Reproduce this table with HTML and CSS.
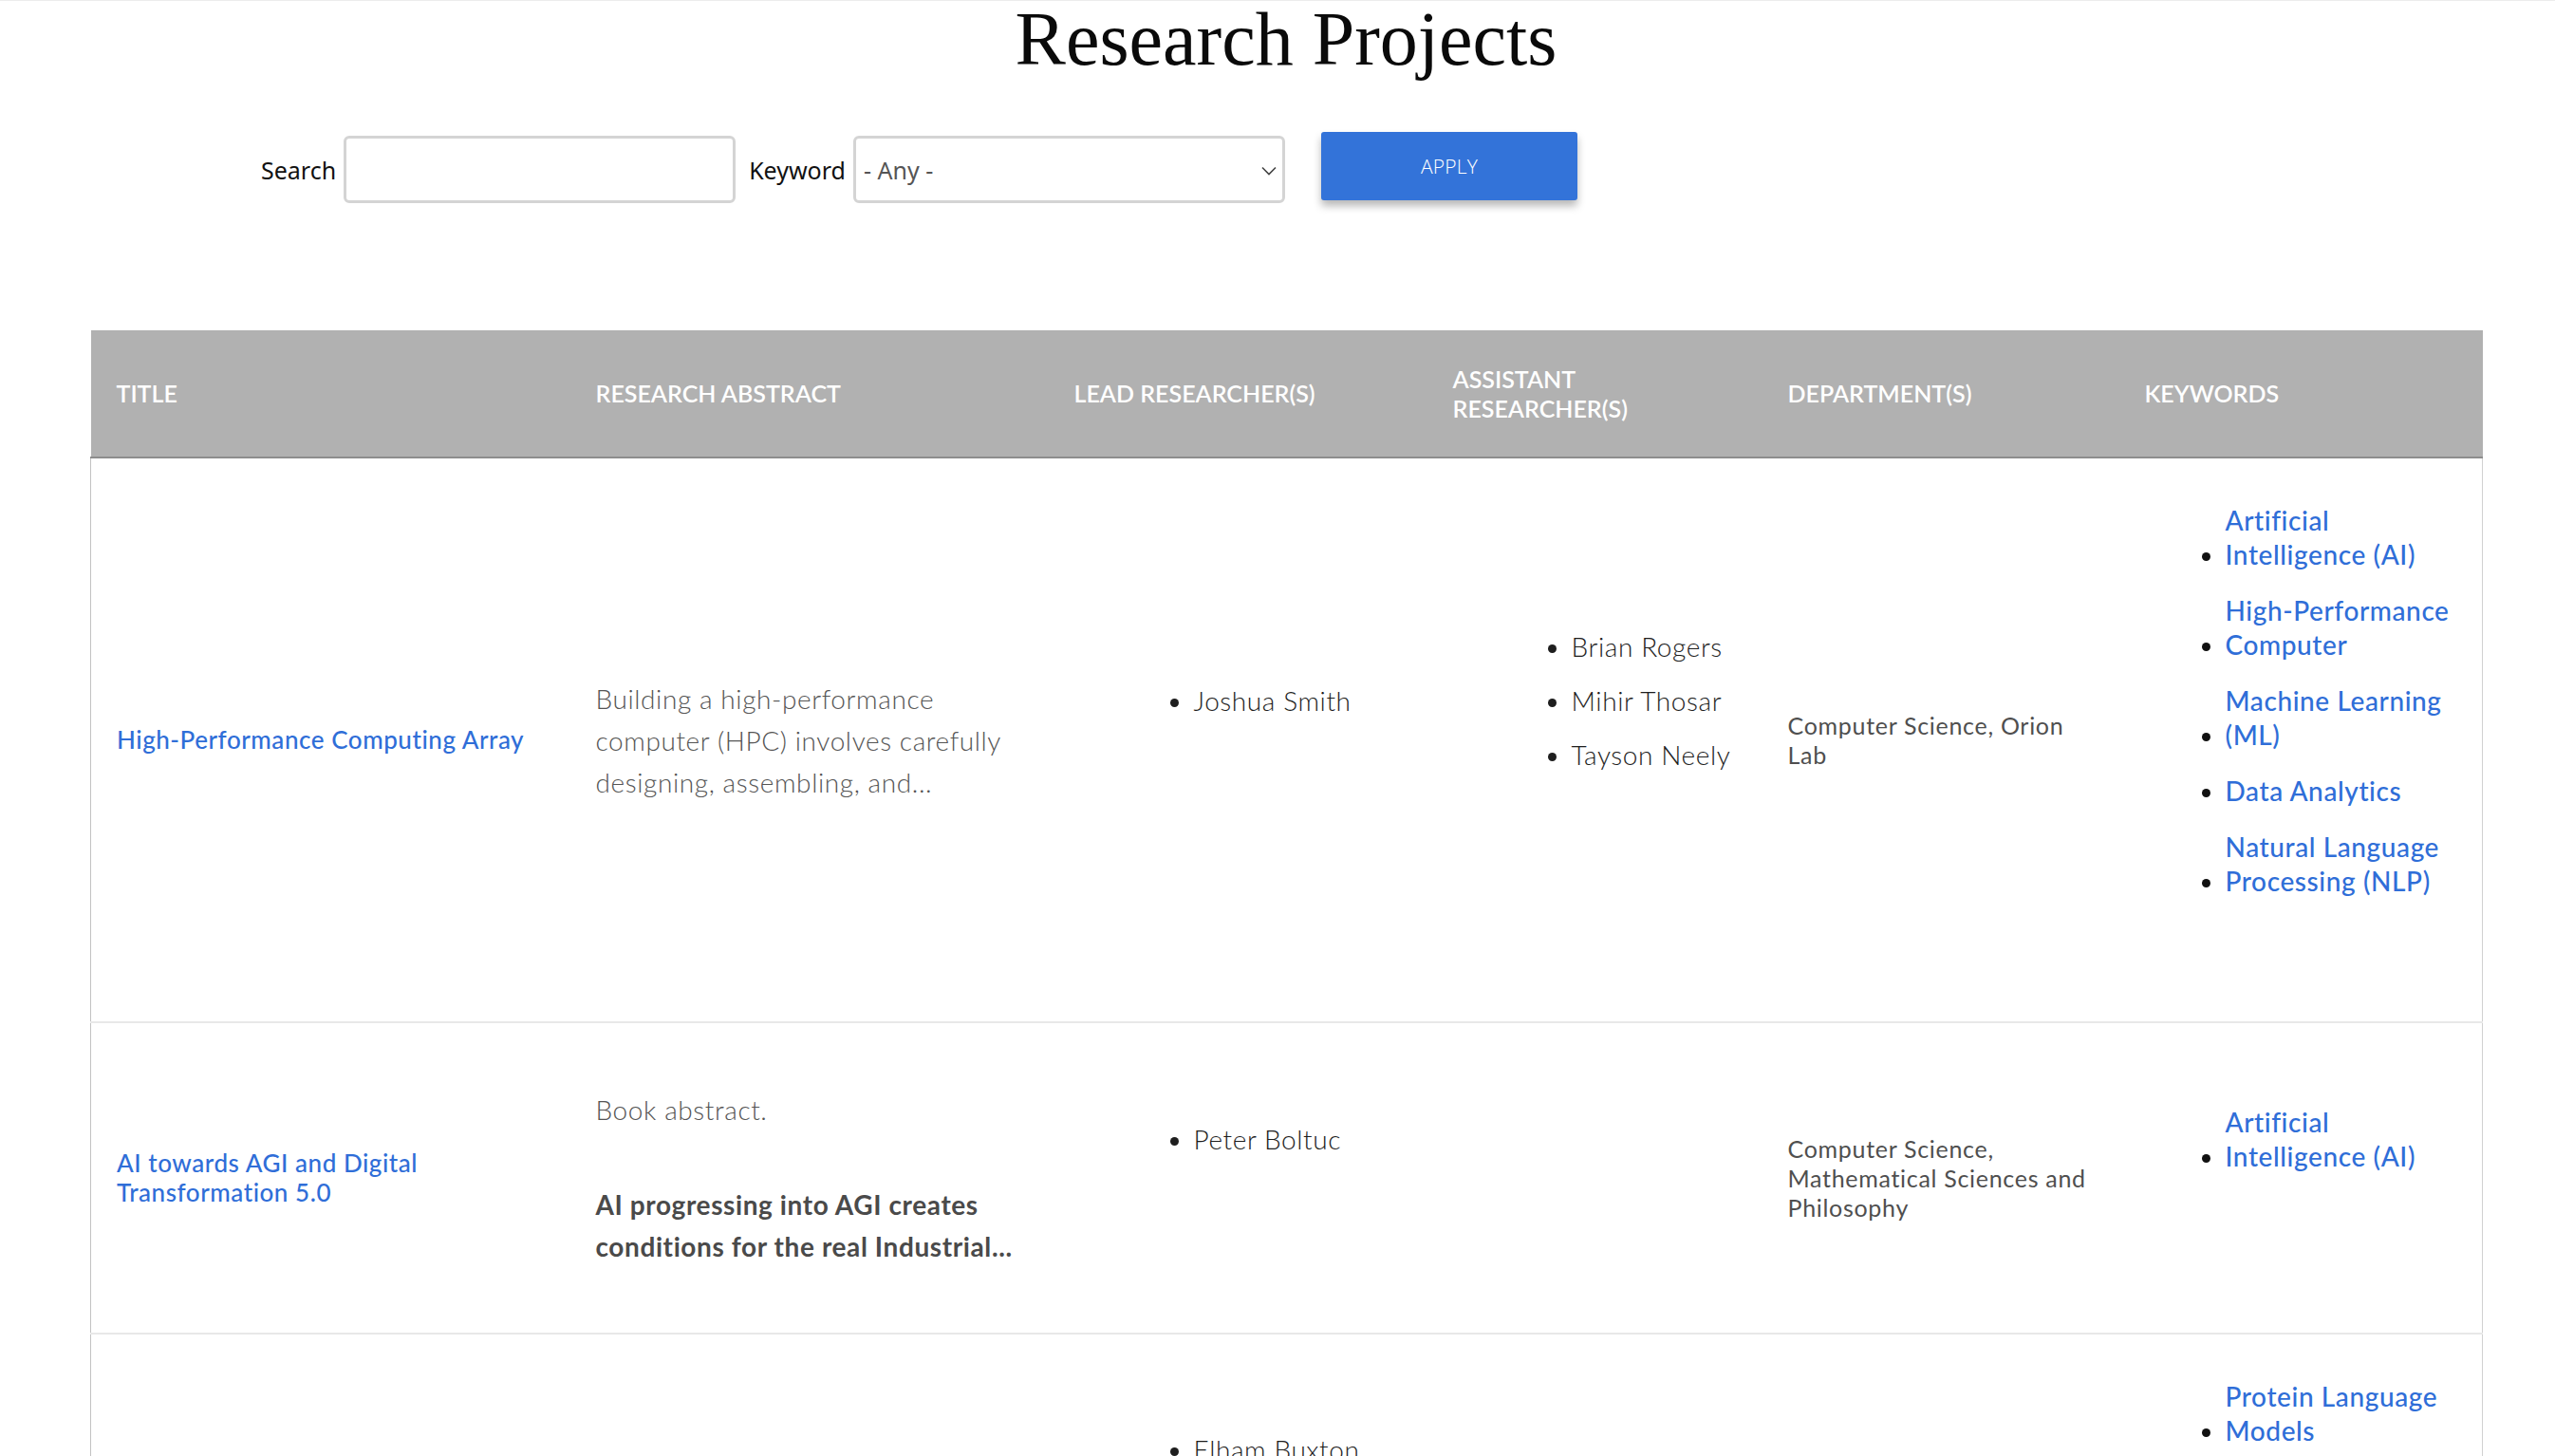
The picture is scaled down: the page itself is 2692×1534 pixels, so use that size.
FILE: index.html
```html
<!DOCTYPE html>
<html lang="en">
<head>
<meta charset="utf-8">
<title>Research Projects</title>
<link rel="stylesheet" href="styles.css">
</head>
<body>
<h1 class="page-title">Research Projects</h1>

<form class="filters">
  <label class="filter-label" for="search">Search</label>
  <input class="search-input" id="search" type="text">
  <label class="filter-label keyword-label" for="keyword">Keyword</label>
  <div class="select-wrap">
    <select class="keyword-select" id="keyword">
      <option>- Any -</option>
    </select>
    <svg class="chevron" width="16" height="10" viewBox="0 0 16 10" aria-hidden="true">
      <path d="M1 1.5 L8 8.5 L15 1.5" fill="none" stroke="#444" stroke-width="1.6"/>
    </svg>
  </div>
  <button class="apply-btn" type="button">APPLY</button>
</form>

<table class="projects">
  <colgroup>
    <col class="col-title">
    <col class="col-abstract">
    <col class="col-lead">
    <col class="col-assist">
    <col class="col-dept">
    <col class="col-keywords">
  </colgroup>
  <thead>
    <tr>
      <th>Title</th>
      <th>Research Abstract</th>
      <th>Lead Researcher(s)</th>
      <th>Assistant Researcher(s)</th>
      <th>Department(s)</th>
      <th>Keywords</th>
    </tr>
  </thead>
  <tbody>
    <tr>
      <td class="cell-title"><a href="#">High-Performance Computing Array</a></td>
      <td class="cell-abstract"><p>Building a high-performance computer (HPC) involves carefully designing, assembling, and...</p></td>
      <td class="cell-lead"><ul class="people"><li>Joshua Smith</li></ul></td>
      <td class="cell-assist"><ul class="people"><li>Brian Rogers</li><li>Mihir Thosar</li><li>Tayson Neely</li></ul></td>
      <td class="cell-dept">Computer Science, Orion Lab</td>
      <td class="cell-keywords">
        <ul class="keywords">
          <li><a href="#">Artificial Intelligence (AI)</a></li>
          <li><a href="#">High-Performance Computer</a></li>
          <li><a href="#">Machine Learning (ML)</a></li>
          <li><a href="#">Data Analytics</a></li>
          <li><a href="#">Natural Language Processing (NLP)</a></li>
        </ul>
      </td>
    </tr>
    <tr>
      <td class="cell-title"><a href="#">AI towards AGI and Digital Transformation 5.0</a></td>
      <td class="cell-abstract"><p>Book abstract.</p><p><strong>AI progressing into AGI creates conditions for the real Industrial...</strong></p></td>
      <td class="cell-lead"><ul class="people"><li>Peter Boltuc</li></ul></td>
      <td class="cell-assist"></td>
      <td class="cell-dept">Computer Science, Mathematical Sciences and Philosophy</td>
      <td class="cell-keywords">
        <ul class="keywords">
          <li><a href="#">Artificial Intelligence (AI)</a></li>
        </ul>
      </td>
    </tr>
    <tr>
      <td class="cell-title"><a href="#">Protein Language Models for Molecular Biology</a></td>
      <td class="cell-abstract"><p>Protein language models learn the structure and function of proteins from sequence data...</p></td>
      <td class="cell-lead"><ul class="people"><li>Elham Buxton</li><li>Joshua Smith</li><li>Peter Boltuc</li></ul></td>
      <td class="cell-assist"></td>
      <td class="cell-dept">Computer Science, Biology</td>
      <td class="cell-keywords">
        <ul class="keywords">
          <li><a href="#">Protein Language Models</a></li>
          <li><a href="#">Machine Learning (ML)</a></li>
          <li><a href="#">Artificial Intelligence (AI)</a></li>
        </ul>
      </td>
    </tr>
  </tbody>
</table>
</body>
</html>
```

FILE: styles.css
```css
* {
  box-sizing: border-box;
}

html,
body {
  margin: 0;
  background: #ffffff;
}

body {
  border-top: 1px solid #ececec;
  font-family: Lato, "Noto Sans", sans-serif;
  color: #222222;
}

.page-title {
  margin: 0;
  padding-left: 18px;
  font-family: "Liberation Serif", "DejaVu Serif", serif;
  font-size: 80px;
  line-height: 80px;
  font-weight: 400;
  text-align: center;
  color: #0a0a0a;
}

/* ---------- filter form ---------- */
.filters {
  display: flex;
  align-items: center;
  margin-top: 58px;
  padding-left: 275px;
}

.filter-label {
  font-family: "Noto Sans", "Open Sans", sans-serif;
  font-size: 25px;
  color: #111111;
  margin-right: 8px;
}

.keyword-label {
  margin-left: 14px;
  margin-right: 8px;
}

.search-input {
  width: 413px;
  height: 71px;
  border: 3px solid #d4d4d4;
  border-radius: 6px;
  background: #ffffff;
  font-size: 25px;
  padding: 0 10px;
}

.select-wrap {
  position: relative;
  width: 455px;
  height: 71px;
}

.keyword-select {
  -webkit-appearance: none;
  appearance: none;
  width: 100%;
  height: 100%;
  border: 3px solid #d4d4d4;
  border-radius: 6px;
  background: #ffffff;
  font-family: "Noto Sans", "Open Sans", sans-serif;
  font-size: 25px;
  color: #555555;
  padding: 0 40px 0 8px;
}

.chevron {
  position: absolute;
  right: 9px;
  top: 32px;
  pointer-events: none;
}

.apply-btn {
  width: 270px;
  height: 72px;
  margin: 0 0 7px 38px;
  border: none;
  border-radius: 3px;
  background: #3373d9;
  color: #ffffff;
  font-family: "Open Sans", "Noto Sans", sans-serif;
  font-weight: 300;
  font-size: 21px;
  letter-spacing: 0.2px;
  box-shadow: 0 6px 9px rgba(0, 0, 0, 0.28);
}

/* ---------- table ---------- */
.projects {
  width: 2520px;
  margin: 130px 0 0 95px;
  border-collapse: collapse;
  table-layout: fixed;
}

.col-title { width: 505px; }
.col-abstract { width: 504px; }
.col-lead { width: 399px; }
.col-assist { width: 353px; }
.col-dept { width: 376px; }
.col-keywords { width: 383px; }

.projects th {
  height: 134px;
  padding: 0 27px;
  background: #b1b1b1;
  border-bottom: 2px solid #8d8d8d;
  color: #ffffff;
  font-family: Lato, sans-serif;
  font-weight: 600;
  font-size: 25px;
  line-height: 31px;
  text-align: left;
  text-transform: uppercase;
  vertical-align: middle;
}

.projects td {
  padding: 13px 27px;
  vertical-align: middle;
  border-bottom: 2px solid #e8e8e8;
}

.projects td:first-child {
  border-left: 1px solid #c2c2c2;
}

.projects td:last-child {
  border-right: 1px solid #d0d0d0;
}

.cell-title a {
  color: #2f6ed8;
  text-decoration: none;
  font-weight: 500;
  font-size: 26px;
  letter-spacing: 0.55px;
  line-height: 31px;
}

.cell-abstract {
  color: #555555;
  font-weight: 300;
  font-size: 28px;
  letter-spacing: 0.6px;
  line-height: 44px;
}

.cell-abstract p {
  margin: 56px 0;
}

.cell-abstract strong {
  font-weight: 700;
  color: #4a4a4a;
}

.people {
  margin: 34px 0 117px;
  padding-left: 126px;
}

.cell-assist .people {
  padding-left: 125px;
}

.people li {
  font-weight: 300;
  font-size: 28px;
  letter-spacing: 0.6px;
  line-height: 36px;
  color: #1e1e1e;
}

.people li + li {
  margin-top: 21px;
}

.cell-dept {
  font-weight: 400;
  font-size: 25px;
  letter-spacing: 0.7px;
  line-height: 31px;
  color: #4f4f4f;
}

.keywords {
  margin: 34px 0 117px;
  padding-left: 85px;
}

.keywords li {
  font-size: 28px;
  letter-spacing: 0.6px;
  line-height: 36px;
  color: #111111;
}

.keywords li + li {
  margin-top: 23px;
}

.keywords a {
  display: inline-block;
  color: #2f6ed8;
  text-decoration: none;
  font-weight: 500;
}
```
